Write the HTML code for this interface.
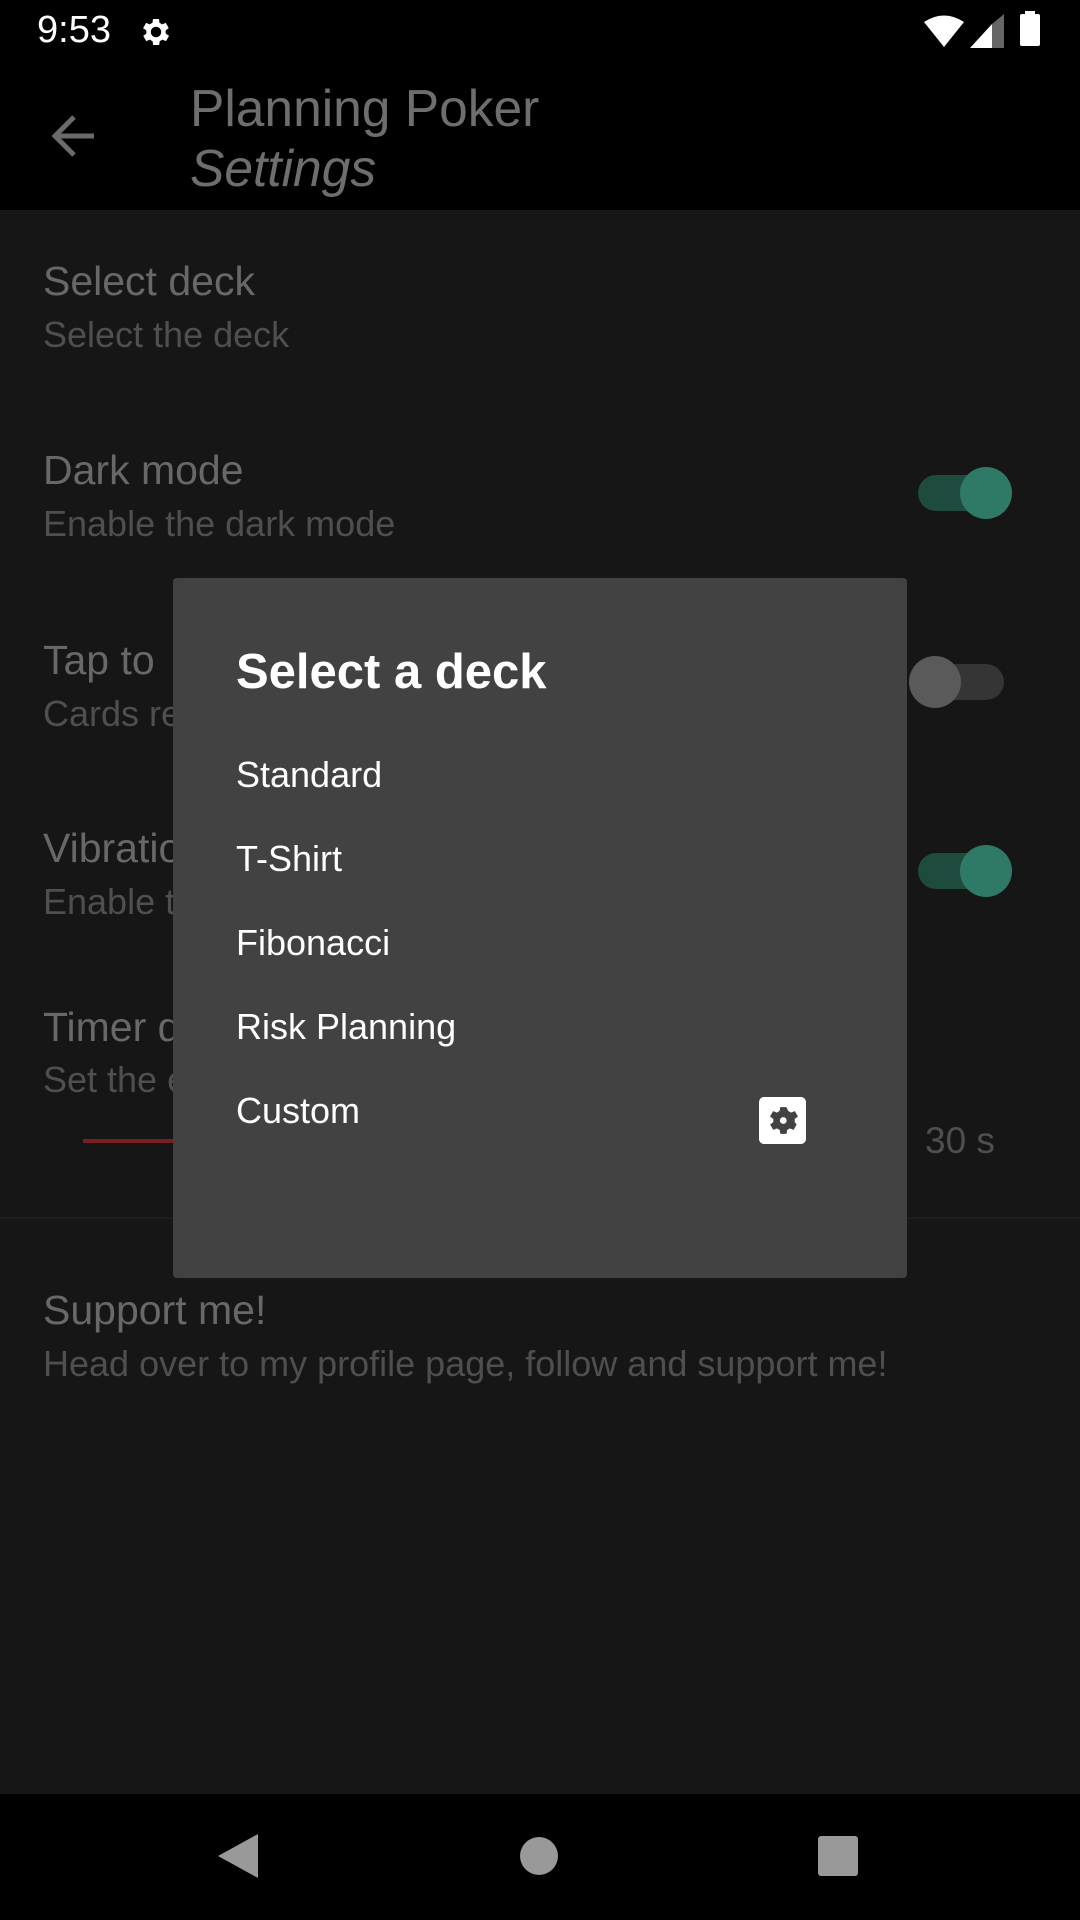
<!DOCTYPE html>
<html><head><meta charset="utf-8"><style>
*{margin:0;padding:0;box-sizing:border-box}
body{width:1080px;height:1920px;background:#161616;position:relative;overflow:hidden;font-family:"Liberation Sans",sans-serif}
.a{position:absolute;white-space:nowrap}
.t{color:#686868;font-size:41px;left:43px}
.s{color:#4f4f4f;font-size:36px;left:43px}
.it{color:#fff;font-size:36px;left:236px}
</style></head><body>
<div class="a" style="left:0;top:0;width:1080px;height:210px;background:#000"></div>
<div class="a" style="left:37px;top:9px;color:#fff;font-size:38px">9:53</div>
<svg class="a" style="left:138px;top:14px" width="36" height="36" viewBox="0 0 24 24"><path fill="#fff" d="M19.4 13a7.5 7.5 0 000-2l2.1-1.6-2-3.5-2.5 1a7 7 0 00-1.7-1L15 3.3h-4l-.4 2.6a7 7 0 00-1.7 1l-2.5-1-2 3.5L6.6 11a7.5 7.5 0 000 2l-2.1 1.6 2 3.5 2.5-1a7 7 0 001.7 1l.4 2.6h4l.4-2.6a7 7 0 001.7-1l2.5 1 2-3.5zM13 15.5A3.5 3.5 0 1113 8.5a3.5 3.5 0 010 7z" transform="translate(-1 0)"/></svg>
<svg class="a" style="left:924px;top:15px" width="40" height="32" viewBox="0 0 40 32"><path fill="#fff" d="M0 7Q20-6 40 7L20 32Z"/></svg>
<svg class="a" style="left:970px;top:14px" width="34" height="34" viewBox="0 0 34 34"><path fill="#fff" d="M0 34L22 10V34Z"/><path fill="#666" d="M22 10L34 0V34H22Z"/></svg>
<div class="a" style="left:1020px;top:14px;width:20px;height:32px;background:#fff;border-radius:2px"></div>
<div class="a" style="left:1025px;top:11px;width:10px;height:4px;background:#fff"></div>
<svg class="a" style="left:50px;top:114px" width="46" height="44" viewBox="0 0 46 44"><path d="M44 22H6M24 3L5 22l19 19" stroke="#6a6a6a" stroke-width="5" fill="none"/></svg>
<div class="a" style="left:190px;top:78px;color:#6e6e6e;font-size:51.5px">Planning Poker</div>
<div class="a" style="left:190px;top:138px;color:#6e6e6e;font-size:51.5px;font-style:italic">Settings</div>

<div class="a t" style="top:258px">Select deck</div>
<div class="a s" style="top:314px">Select the deck</div>
<div class="a t" style="top:447px">Dark mode</div>
<div class="a s" style="top:503px">Enable the dark mode</div>
<div class="a t" style="top:637px">Tap to</div>
<div class="a s" style="top:693px">Cards re</div>
<div class="a t" style="top:825px">Vibratio</div>
<div class="a s" style="top:881px">Enable t</div>
<div class="a t" style="top:1004px">Timer d</div>
<div class="a s" style="top:1059px">Set the e</div>
<div class="a" style="left:83px;top:1139px;width:90px;height:4px;background:#7a1f1f"></div>
<div class="a" style="left:925px;top:1120px;color:#4f4f4f;font-size:37px">30 s</div>
<div class="a" style="left:0;top:1217px;width:1080px;height:2px;background:#1e1e1e"></div>
<div class="a t" style="top:1287px">Support me!</div>
<div class="a s" style="top:1343px">Head over to my profile page, follow and support me!</div>

<div class="a" style="left:918px;top:475px;width:86px;height:36px;border-radius:18px;background:#1f4a3e"></div>
<div class="a" style="left:960px;top:467px;width:52px;height:52px;border-radius:50%;background:#2e7a66"></div>
<div class="a" style="left:918px;top:664px;width:86px;height:36px;border-radius:18px;background:#353535"></div>
<div class="a" style="left:909px;top:656px;width:52px;height:52px;border-radius:50%;background:#5a5a5a"></div>
<div class="a" style="left:918px;top:853px;width:86px;height:36px;border-radius:18px;background:#1f4a3e"></div>
<div class="a" style="left:960px;top:845px;width:52px;height:52px;border-radius:50%;background:#2e7a66"></div>

<div class="a" style="left:173px;top:578px;width:734px;height:700px;background:#424242;border-radius:4px"></div>
<div class="a" style="left:236px;top:644px;color:#fff;font-size:49px;font-weight:bold">Select a deck</div>
<div class="a it" style="top:754px">Standard</div>
<div class="a it" style="top:838px">T-Shirt</div>
<div class="a it" style="top:922px">Fibonacci</div>
<div class="a it" style="top:1006px">Risk Planning</div>
<div class="a it" style="top:1090px">Custom</div>
<div class="a" style="left:759px;top:1097px;width:47px;height:47px;background:#fff;border-radius:5px"></div>
<svg class="a" style="left:764px;top:1102px" width="37" height="37" viewBox="0 0 24 24"><path fill="#424242" d="M19.4 13a7.5 7.5 0 000-2l2.1-1.6-2-3.5-2.5 1a7 7 0 00-1.7-1L14 3.3h-4l-.4 2.6a7 7 0 00-1.7 1l-2.5-1-2 3.5L5.6 11a7.5 7.5 0 000 2l-2.1 1.6 2 3.5 2.5-1a7 7 0 001.7 1l.4 2.6h4l.4-2.6a7 7 0 001.7-1l2.5 1 2-3.5zM12 14.2a2.2 2.2 0 110-4.4 2.2 2.2 0 010 4.4z" transform="translate(0.5 0)"/></svg>

<div class="a" style="left:0;top:1794px;width:1080px;height:126px;background:#000"></div>
<svg class="a" style="left:218px;top:1834px" width="42" height="44" viewBox="0 0 42 44"><path fill="#999" d="M40 0V44L0 22Z"/></svg>
<div class="a" style="left:520px;top:1837px;width:38px;height:38px;border-radius:50%;background:#999"></div>
<div class="a" style="left:818px;top:1836px;width:40px;height:40px;border-radius:3px;background:#999"></div>
</body></html>
